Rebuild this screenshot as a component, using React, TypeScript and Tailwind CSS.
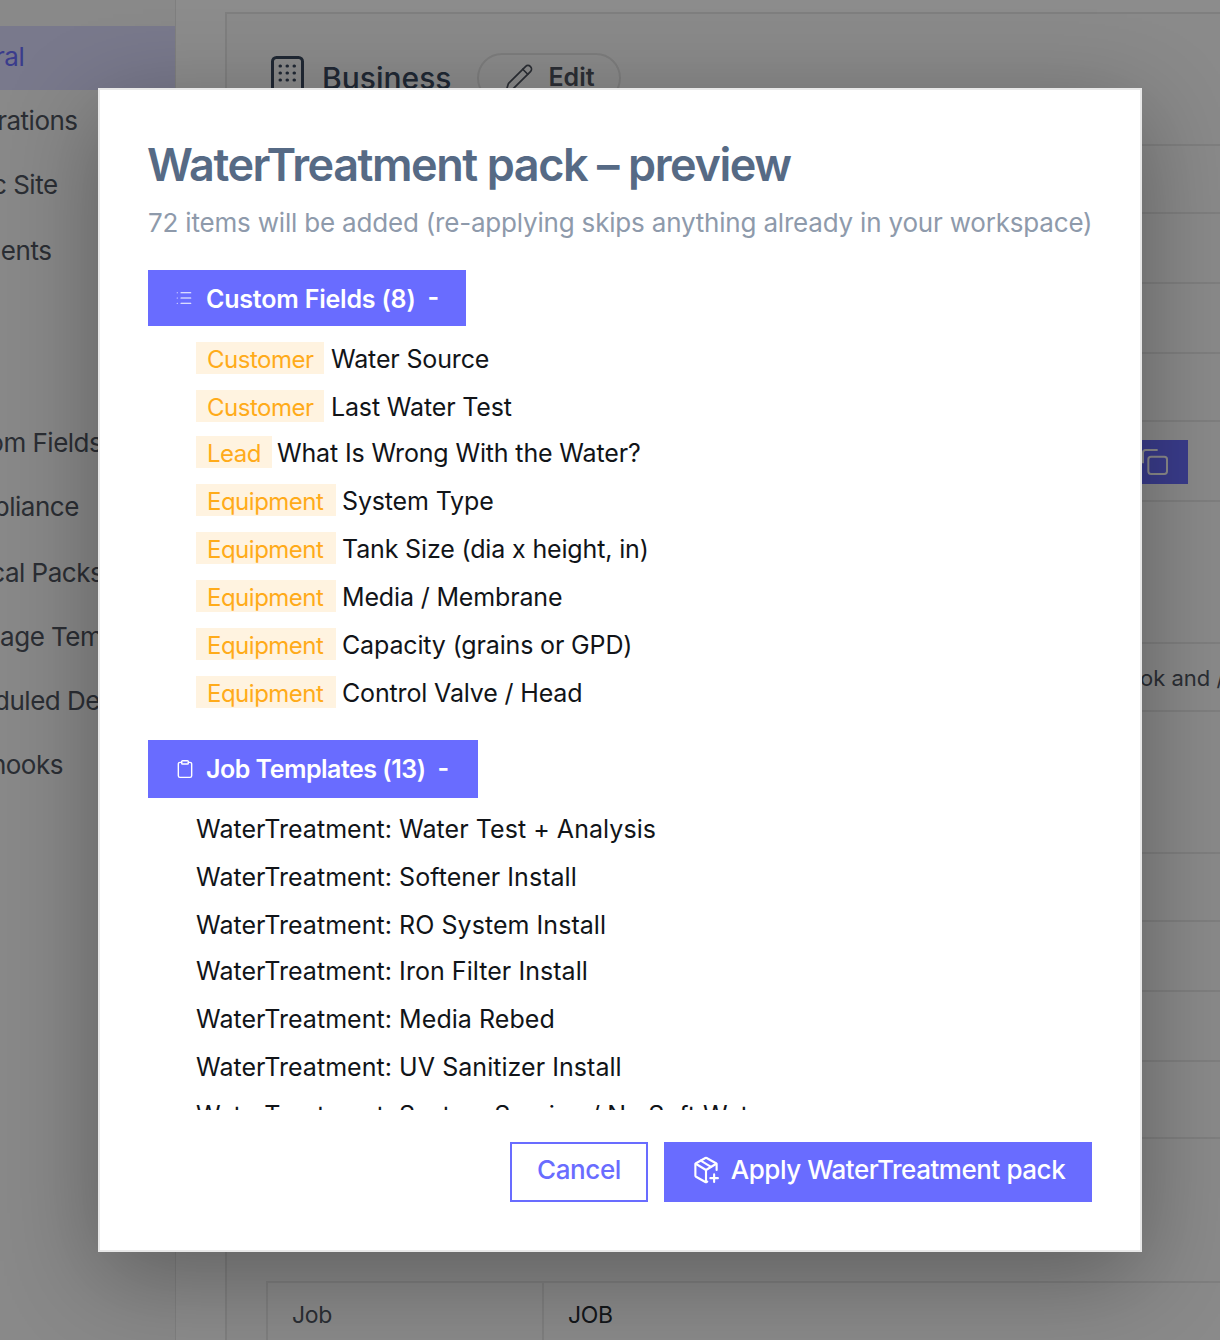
import { Clipboard, List, Pencil } from "lucide-react";

const SIDEBAR_ITEMS = [
  { label: "Integrations", offset: "ml-[-62px]", top: "mt-[15px]" },
  { label: "Public Site", offset: "ml-[-66px]", top: "mt-[32px]" },
  { label: "Documents", offset: "ml-[-84px]", top: "mt-[34px]" },
  { label: "Custom Fields", offset: "ml-[-66px]", top: "mt-[160px]" },
  { label: "Compliance", offset: "ml-[-62px]", top: "mt-[32px]" },
  { label: "Vertical Packs", offset: "ml-[-64px]", top: "mt-[34px]" },
  { label: "Message Templates", offset: "ml-[-64px]", top: "mt-[32px]" },
  { label: "Scheduled Delivery", offset: "ml-[-66px]", top: "mt-[32px]" },
  { label: "Webhooks", offset: "ml-[-63px]", top: "mt-[32px]" },
];

const ROW_HEIGHTS = ["h-[68px]", "h-[70px]", "h-[70px]", "h-[68px]", "h-[80px]", "h-[142px]", "h-[68px]", "h-[142px]", "h-[68px]", "h-[70px]", "h-[70px]", "h-[77px]"];

const CUSTOM_FIELDS = [
  { tag: "Customer", name: "Water Source", box: "w-[128px]", gap: "ml-[7px]", row: "h-[48px]" },
  { tag: "Customer", name: "Last Water Test", box: "w-[128px]", gap: "ml-[7px]", row: "h-[46px]" },
  { tag: "Lead", name: "What Is Wrong With the Water?", box: "w-[76px]", gap: "ml-[5px]", row: "h-[48px]" },
  { tag: "Equipment", name: "System Type", box: "w-[140px]", gap: "ml-[6px]", row: "h-[48px]" },
  { tag: "Equipment", name: "Tank Size (dia x height, in)", box: "w-[140px]", gap: "ml-[6px]", row: "h-[48px]" },
  { tag: "Equipment", name: "Media / Membrane", box: "w-[140px]", gap: "ml-[6px]", row: "h-[48px]" },
  { tag: "Equipment", name: "Capacity (grains or GPD)", box: "w-[140px]", gap: "ml-[6px]", row: "h-[48px]" },
  { tag: "Equipment", name: "Control Valve / Head", box: "w-[140px]", gap: "ml-[6px]", row: "h-[48px]" },
];

const JOB_TEMPLATES = [
  { name: "WaterTreatment: Water Test + Analysis", row: "h-[48px]" },
  { name: "WaterTreatment: Softener Install", row: "h-[48px]" },
  { name: "WaterTreatment: RO System Install", row: "h-[46px]" },
  { name: "WaterTreatment: Iron Filter Install", row: "h-[48px]" },
  { name: "WaterTreatment: Media Rebed", row: "h-[48px]" },
  { name: "WaterTreatment: UV Sanitizer Install", row: "h-[48px]" },
  { name: "WaterTreatment: System Service / No Soft Water", row: "h-[48px]" },
];

function PackagePlusIcon() {
  return (
    <svg width="30" height="30" viewBox="0 0 24 24" fill="none" stroke="currentColor" strokeWidth="1.7" strokeLinecap="round" strokeLinejoin="round">
      <path d="M20.5 12V7.5a1 1 0 0 0-.5-.9l-7.5-4.2a1 1 0 0 0-1 0L4 6.6a1 1 0 0 0-.5.9v9a1 1 0 0 0 .5.9l7.5 4.2a1 1 0 0 0 1 0l.5-.3" />
      <path d="M3.8 7 12 12l8.2-5" />
      <path d="M12 12v9.5" />
      <path d="M7.8 4.5l8.2 5" />
      <path d="M18.5 15.5v6M15.5 18.5h6" />
    </svg>
  );
}

function BuildingIcon() {
  return (
    <svg width="33" height="40" viewBox="0 0 33 40" fill="none" stroke="currentColor" strokeWidth="3">
      <rect x="1.5" y="1.5" width="30" height="37" rx="4" />
      <path d="M9 10h.5M16 10h.5M23 10h.5M9 17h.5M16 17h.5M23 17h.5M9 24h.5M16 24h.5M23 24h.5" strokeWidth="3" strokeLinecap="round" />
    </svg>
  );
}

function Backdrop() {
  return (
    <div className="flex h-[1340px] w-[1220px] overflow-hidden bg-white">
      {/* sidebar */}
      <aside className="w-[176px] shrink-0 overflow-hidden border-r border-[#e8e8e8] bg-[#fafafa] pt-[26px]">
        <div className="flex h-[64px] items-center overflow-hidden bg-[#dcdcff] pb-[3px] text-[26px] tracking-[-0.5px] text-[#6a6dff]">
          <span className="ml-[-68px]">General</span>
        </div>
        {SIDEBAR_ITEMS.map((item) => (
          <div key={item.label} className={`${item.top} ${item.offset} h-[32px] whitespace-nowrap text-[26px] leading-[32px] tracking-[-0.5px] text-[#4f5560]`}>
            {item.label}
          </div>
        ))}
      </aside>

      {/* settings card */}
      <main className="ml-[49px] mt-[12px] flex-1 border-l-2 border-t-2 border-[#e8e8e8] bg-[#fcfcfc]">
        <div className="flex h-[132px] items-start border-b-2 border-[#e8e8e8] pl-[44px] pt-[42px] text-[#3b4a5f]">
          <BuildingIcon />
          <span className="ml-[18px] text-[30px] font-medium leading-[44px]">Business</span>
          <span className="ml-[26px] -mt-[3px] flex h-[50px] w-[144px] items-center justify-center gap-[14px] rounded-full border-2 border-[#e3e3e3] text-[25px] font-semibold text-[#4f5560]">
            <Pencil size={30} strokeWidth={1.4} />
            Edit
          </span>
        </div>
        {ROW_HEIGHTS.map((height, i) => (
          <div key={i} className={`${height} relative border-b-2 border-[#e8e8e8]`}>
            {i === 4 && (
              <span className="absolute right-[32px] top-[18px] flex h-[44px] w-[80px] items-center justify-end bg-[#6a6dff] pr-[17px] text-white">
                <svg width="32" height="32" viewBox="0 0 24 24" fill="none" stroke="currentColor" strokeWidth="1.5"><rect x="7" y="8" width="14" height="13" rx="2" /><path d="M3 13V5a2 2 0 0 1 2-2h9" /></svg>
              </span>
            )}
            {i === 6 && (
              <span className="absolute left-[913px] top-[18px] whitespace-nowrap text-[22px] text-[#4f5560]">ok and /</span>
            )}
          </div>
        ))}
        <div className="relative ml-[39px] mt-[142px] flex h-[70px] border-l-2 border-t-2 border-[#e8e8e8] pb-[4px] text-[23px] tracking-[-0.3px] text-[#4f5560]">
          <div className="flex w-[274px] items-center pl-[24px]">Job</div>
          <div className="-mb-[4px] flex items-center border-l-2 border-[#e8e8e8] pb-[4px] pl-[24px] text-[#242a31]">JOB</div>
        </div>
      </main>
    </div>
  );
}

export default function App() {
  return (
    <div className="relative h-[1340px] w-[1220px] overflow-hidden font-['Inter','Liberation_Sans',sans-serif]">
      <Backdrop />

      {/* overlay + modal */}
      <div className="absolute inset-0 bg-black/45">
        <div className="absolute left-[98px] top-[88px] flex h-[1164px] w-[1044px] flex-col border-2 border-[#e8e8e8] bg-white pl-[48px] pr-[48px] pt-[49px] shadow-[0_24px_90px_rgba(0,0,0,0.32)]">
          <h2 className="-ml-[1px] whitespace-nowrap text-[45px] font-semibold leading-[52px] tracking-[-1.44px] text-[#566a85]">WaterTreatment pack – preview</h2>
          <p className="mt-[14px] whitespace-nowrap text-[26px] leading-[36px] tracking-[-0.19px] text-[#8e9aab]">72 items will be added (re-applying skips anything already in your workspace)</p>

          <div className="mt-[29px] h-[840px] overflow-hidden">
            <div className="flex h-[56px] w-[318px] items-center bg-[#696cff] pl-[27px] text-white">
              <List size={18} strokeWidth={1.5} />
              <span className="ml-[13px] pt-[3px] text-[25px] font-semibold tracking-[-0.2px]">Custom Fields (8)</span>
              <span className="ml-[12px] text-[25px] font-semibold">-</span>
            </div>

            <ul className="mt-[16px] pl-[48px] text-[25px] tracking-[-0.15px] text-[#111418]">
              {CUSTOM_FIELDS.map((field) => (
                <li key={field.name} className={`flex items-start ${field.row}`}>
                  <span className={`flex h-[32px] items-center bg-[#fff3e0] pl-[11px] pt-[4px] text-[24px] tracking-[-0.5px] text-[#ffab1a] ${field.box}`}>{field.tag}</span>
                  <span className={`${field.gap} leading-[34px]`}>{field.name}</span>
                </li>
              ))}
            </ul>

            <div className="mt-[16px] flex h-[58px] w-[330px] items-center bg-[#696cff] pl-[27px] text-white">
              <Clipboard size={20} strokeWidth={1.7} />
              <span className="ml-[11px] pt-[2px] text-[25px] font-semibold tracking-[-0.5px]">Job Templates (13)</span>
              <span className="ml-[12px] text-[25px] font-semibold">-</span>
            </div>

            <ul className="mt-[14px] pl-[48px] text-[25px] tracking-[0.05px] text-[#111418]">
              {JOB_TEMPLATES.map((item) => (
                <li key={item.name} className={`whitespace-nowrap leading-[34px] ${item.row}`}>{item.name}</li>
              ))}
            </ul>
          </div>

          <div className="mt-[32px] flex justify-end gap-[16px]">
            <button className="h-[60px] w-[138px] border-2 border-[#696cff] pb-[6px] text-[26px] font-medium tracking-[-0.4px] text-[#696cff]">Cancel</button>
            <button className="flex h-[60px] w-[428px] items-center justify-center gap-[10px] bg-[#696cff] pb-[4px] text-[26px] font-medium tracking-[-0.45px] text-white">
              <PackagePlusIcon />
              <span className="-mt-[2px]">Apply WaterTreatment pack</span>
            </button>
          </div>
        </div>
      </div>
    </div>
  );
}
